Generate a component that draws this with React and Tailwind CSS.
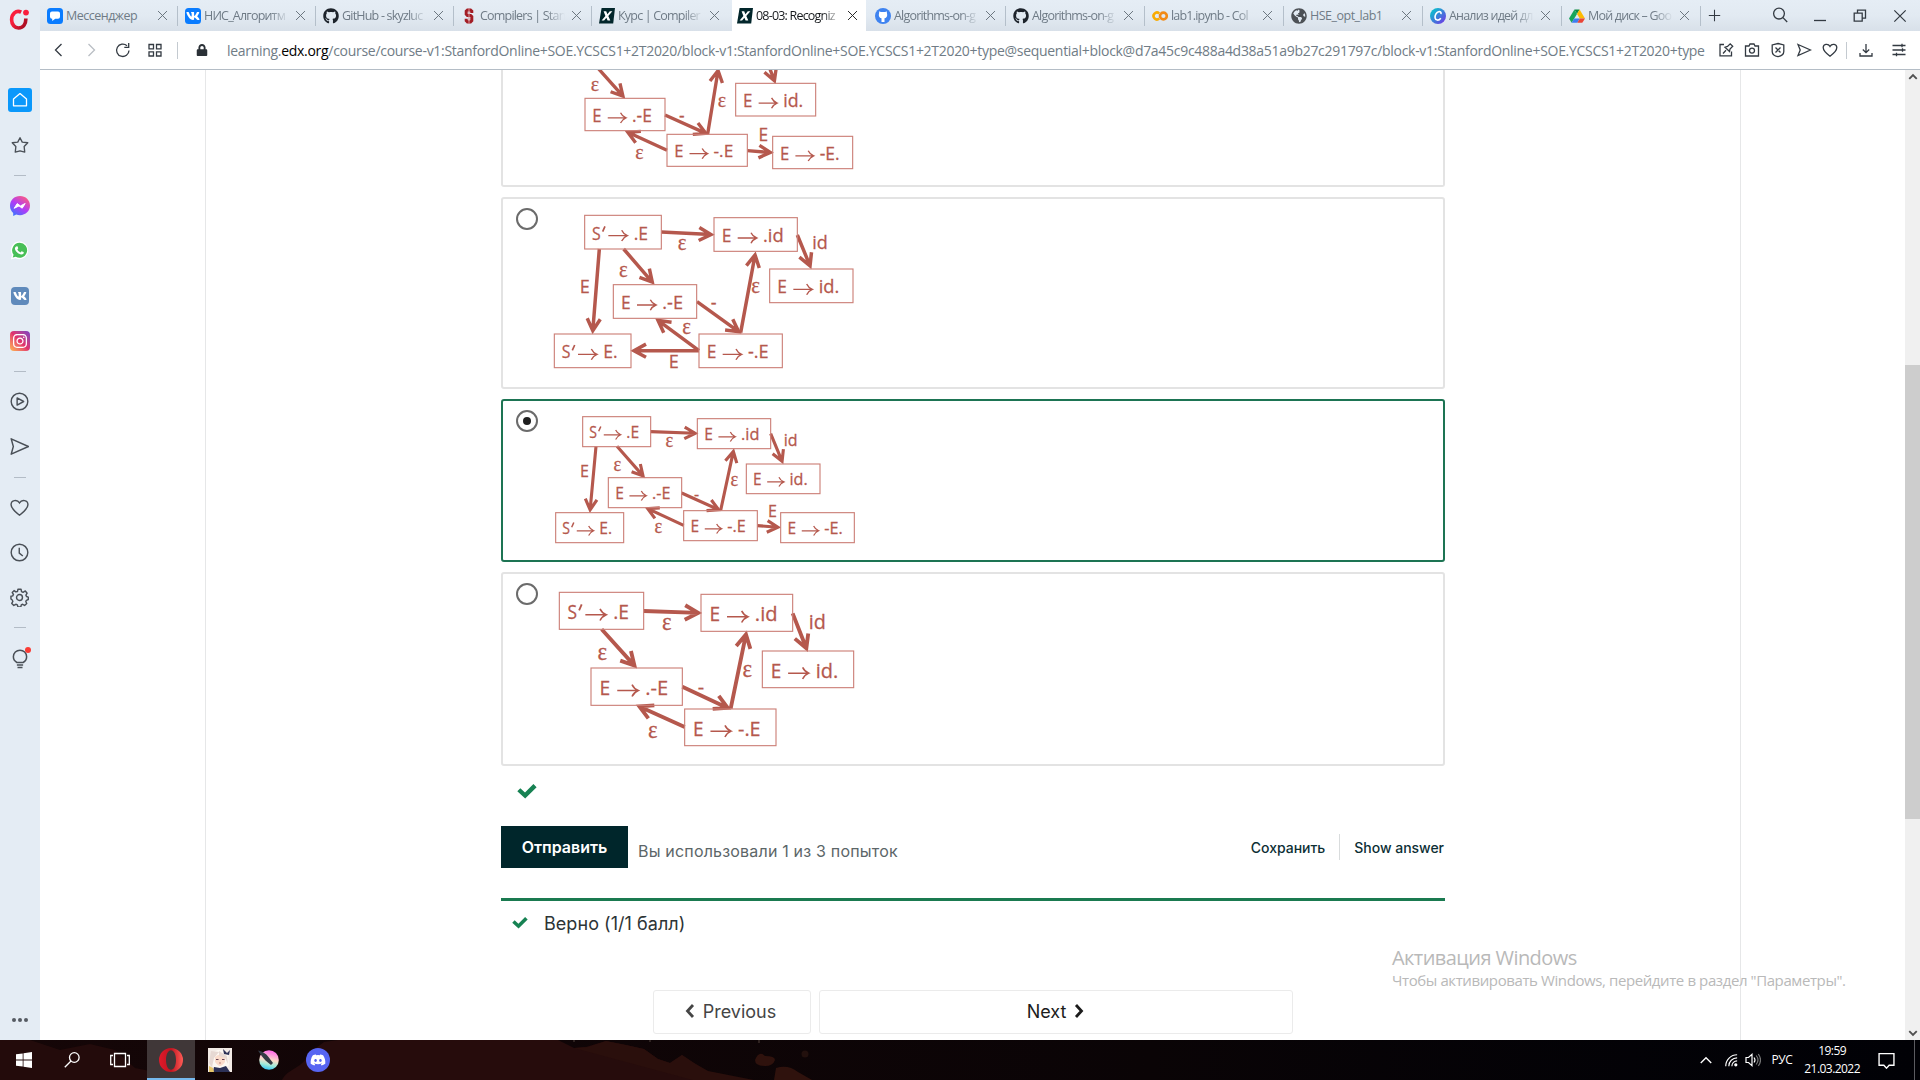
import React from "react";
import {
  FaGithub, FaVk, FaWhatsapp, FaInstagram, FaDiscord, FaLock, FaGlobeAmericas,
} from "react-icons/fa";

const RED = "#b5584d";

/* ---------- automaton diagrams ---------- */

function Node({ x, y, w, h, a, b }) {
  const s = h / 101;
  const prime = a === "S";
  const ax = x + 71 * s;
  const ay = y + 61 * s;
  const len = 57 * s;
  const wide = { ".E": 43, "E.": 43 }[b] || 62;
  return (
    <g>
      <rect x={x} y={y} width={w} height={h} fill="none" stroke="#cc8078" strokeWidth="3.4" />
      <g fill={RED} stroke={RED} strokeWidth="0.8" fontSize={54 * s} fontFamily="'Open Sans','Noto Sans',sans-serif">
        <text x={x + (prime ? 22 : 23) * s} y={y + 73 * s} textLength={(prime ? 26 : 29) * s} lengthAdjust="spacingAndGlyphs">{a}</text>
        <text x={x + 147 * s} y={y + 73 * s} textLength={wide * s} lengthAdjust="spacingAndGlyphs">{b}</text>
      </g>
      {prime && <path d={`M${x + 61 * s} ${y + 33 * s}l${-7 * s} ${16 * s}`} stroke={RED} strokeWidth={5 * s} />}
      <path
        d={`M${ax} ${ay}h${len}m${-17 * s} ${-16 * s}q${5 * s} ${11 * s} ${17 * s} ${16 * s}q${-12 * s} ${5 * s} ${-17 * s} ${16 * s}`}
        fill="none" stroke={RED} strokeWidth={4.2 * s}
      />
    </g>
  );
}

function Edge({ p, s }) {
  const [x1, y1, x2, y2] = p;
  const t = Math.atan2(y2 - y1, x2 - x1);
  const L = 41 * s;
  const ex = x2 - 5 * s * Math.cos(t);
  const ey = y2 - 5 * s * Math.sin(t);
  const wing = (d) => `${ex - L * Math.cos(t + d)} ${ey - L * Math.sin(t + d)}`;
  return (
    <path
      d={`M${x1} ${y1}L${ex} ${ey}M${wing(0.5)}L${ex} ${ey}L${wing(-0.5)}`}
      fill="none" stroke={RED} strokeWidth={10.5 * s}
    />
  );
}

function Label({ x, y, t, s }) {
  const eps = t === "ε";
  return (
    <text
      x={x} y={y} textAnchor="middle" fill={RED} stroke={RED} strokeWidth="0.8"
      fontSize={(eps ? 68 : 54) * s}
      {...(eps ? { textLength: 26 * s, lengthAdjust: "spacingAndGlyphs" } : {})}
      fontFamily={eps ? "'Liberation Serif',serif" : "'Open Sans','Noto Sans',sans-serif"}
    >
      {t}
    </text>
  );
}

function Diagram({ top, height, s, nodes, edges, labels }) {
  return (
    <svg className="block shrink-0 overflow-hidden" width="350" height={height} viewBox={`150 ${top} 1050 ${height * 3}`}>
      {edges.map((p, i) => <Edge key={i} p={p} s={s} />)}
      {nodes.map(([x, y, w, h, a, b], i) => <Node key={i} x={x} y={y} w={w} h={h} a={a} b={b} />)}
      {labels.map(([x, y, t], i) => <Label key={i} x={x} y={y} t={t} s={s} />)}
    </svg>
  );
}

const D1 = {
  top: 15, height: 115, s: 0.96,
  nodes: [[285, 100, 240, 97, "E", ".-E"], [531, 208, 241, 96, "E", "-.E"], [737, 55, 240, 98, "E", "id."], [848, 214, 240, 97, "E", "-E."]],
  edges: [[320, 5, 402, 97], [525, 150, 652, 207], [531, 256, 409, 200], [653, 207, 685, 12], [822, -35, 855, 52], [772, 257, 846, 263]],
  labels: [[315, 79, "ε"], [696, 126, "ε"], [575, 170, "-"], [448, 283, "ε"], [820, 228, "E"]],
};
const D2 = {
  top: 402, height: 188, s: 1,
  nodes: [[284, 451, 230, 101, "S", ".E"], [672, 458, 250, 101, "E", ".id"], [370, 659, 250, 101, "E", ".-E"], [839, 612, 250, 101, "E", "id."], [193, 807, 230, 101, "S", "E."], [627, 807, 250, 101, "E", "-.E"]],
  edges: [[514, 501, 668, 509], [401, 552, 490, 655], [328, 552, 308, 802], [922, 510, 962, 607], [621, 710, 750, 803], [752, 803, 796, 565], [627, 857, 500, 763], [627, 857, 427, 857]],
  labels: [[576, 555, "ε"], [400, 637, "ε"], [284, 683, "E"], [990, 551, "id"], [797, 685, "ε"], [671, 731, "-"], [590, 808, "ε"], [551, 908, "E"]],
};
const D3 = {
  top: 33, height: 159, s: 0.89,
  nodes: [[278, 80, 204, 90, "S", ".E"], [622, 86, 220, 90, "E", ".id"], [355, 263, 220, 90, "E", ".-E"], [769, 222, 221, 89, "E", "id."], [197, 368, 204, 90, "S", "E."], [581, 362, 221, 90, "E", "-.E"], [872, 368, 221, 90, "E", "-E."]],
  edges: [[482, 125, 620, 130], [381, 169, 462, 261], [318, 169, 300, 364], [842, 131, 878, 218], [575, 309, 690, 361], [692, 361, 731, 180], [581, 406, 469, 354], [802, 407, 868, 412]],
  labels: [[538, 171, "ε"], [382, 243, "ε"], [283, 260, "E"], [902, 168, "id"], [733, 287, "ε"], [620, 329, "-"], [505, 430, "ε"], [847, 382, "E"]],
};
const D4 = {
  top: 42, height: 190, s: 1.1,
  nodes: [[208, 97, 253, 111, "S", ".E"], [633, 103, 275, 111, "E", ".id"], [303, 324, 274, 112, "E", ".-E"], [584, 447, 274, 110, "E", "-.E"], [817, 273, 274, 110, "E", "id."]],
  edges: [[461, 153, 630, 159], [335, 208, 437, 321], [908, 160, 951, 270], [577, 380, 718, 446], [722, 446, 769, 218], [584, 501, 443, 437]],
  labels: [[530, 209, "ε"], [337, 301, "ε"], [982, 206, "id"], [772, 352, "ε"], [633, 402, "-"], [488, 533, "ε"]],
};

function Choice({ data, selected, className }) {
  return (
    <div className={"flex shrink-0 gap-0.5 rounded-[3px] border-2 pl-[13px] " + (selected ? "border-[#1d7453] " : "border-[#e3e3e3] ") + className}>
      <span className="mt-[9px] flex size-[22px] shrink-0 items-center justify-center rounded-full border-2 border-[#6b6b6b]">
        {selected && <span className="size-2 rounded-full bg-[#1f1f1f]" />}
      </span>
      <Diagram {...data} />
    </div>
  );
}

/* ---------- browser chrome ---------- */

function Line({ children, className = "size-4", sw = 1.3, vb = "0 0 16 16" }) {
  return (
    <svg className={className} viewBox={vb} fill="none" stroke="currentColor" strokeWidth={sw}>
      {children}
    </svg>
  );
}

const Cross = ({ className = "size-[11px]" }) => (
  <Line className={className} sw={1.4}><path d="M1.5 1.5l13 13M14.5 1.5l-13 13" /></Line>
);

const EdxIcon = () => (
  <svg className="size-4" viewBox="0 0 16 16">
    <path d="M2.6 0H16l-1.8 15.6H0z" fill="#02262b" />
    <path d="M4.6 3.2h2.6l1.2 3 2.4-3h2.6L9.3 8l2 4.6H8.6L7.4 9.8l-2.3 2.8H2.6L6.4 8z" fill="#fff" />
  </svg>
);

const favicons = {
  chat: (
    <svg className="size-4" viewBox="0 0 16 16">
      <rect width="16" height="16" rx="3.5" fill="#0a7cff" />
      <path d="M5 3.4h6A2 2 0 0113 5.4v3.4a2 2 0 01-2 2H8.3L5.2 13v-2.2H5a2 2 0 01-2-2V5.4A2 2 0 015 3.4z" fill="#fff" />
    </svg>
  ),
  vk: <span className="flex size-4 items-center justify-center rounded-[3.5px] bg-[#0a7cff] text-white"><FaVk className="size-3.5" /></span>,
  github: <FaGithub className="size-4 text-[#1d232b]" />,
  stanford: (
    <svg className="size-4" viewBox="0 0 16 16" fill="none">
      <path d="M10.8 5V3.2L9.5 2h-3L5.2 3.2v3l1.2 1.2h3.2l1.2 1.2v4L9.5 14h-3l-1.3-1.4V10.8" stroke="#a31d25" strokeWidth="3" />
      <path d="M8 .5v15" stroke="#d98d90" strokeWidth="1" />
    </svg>
  ),
  edx: <EdxIcon />,
  ghpages: (
    <span className="flex size-4 items-center justify-center rounded-full bg-[#3f83f0]">
      <svg className="size-3" viewBox="0 0 12 12" fill="#fff"><path d="M2.3 1.2l1.5.8h4.4l1.5-.8.5 3.8c0 2-1.2 3-2.7 3.2V12h-3V8.200C3 8 1.800 7 1.800 5z" /></svg>
    </span>
  ),
  colab: (
    <svg className="size-4" viewBox="0 0 16 16" fill="none" strokeWidth="2.6">
      <circle cx="11.4" cy="8" r="3.4" stroke="#f28a17" />
      <path d="M7.2 5.400a3.400 3.400 0 100 5.200" stroke="#f9ab00" />
    </svg>
  ),
  globe: <FaGlobeAmericas className="size-4 text-[#4d5156]" />,
  canva: (
    <svg className="size-4" viewBox="0 0 16 16">
      <defs><linearGradient id="cv" x1="0" y1="0" x2="1" y2="1"><stop offset=".2" stopColor="#12b5cf" /><stop offset="1" stopColor="#7a2be8" /></linearGradient></defs>
      <circle cx="8" cy="8" r="8" fill="url(#cv)" />
      <path d="M11 6.200c.4-2.200-1-3-2.500-2.400C6.200 4.600 4.800 7.500 5.100 9.800c.4 2.700 3.500 3.200 5.700.4" fill="none" stroke="#fff" strokeWidth="1.6" />
    </svg>
  ),
  drive: (
    <svg className="size-4" viewBox="0 0 16 16">
      <path d="M5.400 1.500h5.200L8 6z" fill="#0c8a43" />
      <path d="M5.400 1.500L8 6 2.700 14.800 0 10.500z" fill="#17a55b" />
      <path d="M10.600 1.500L16 10.500h-5.200L8 6z" fill="#fdba02" />
      <path d="M5.200 10.500h5.600l-2.500 4.300H2.700z" fill="#3f7df0" />
      <path d="M10.800 10.500H16l-2.700 4.300H8.300z" fill="#ea4436" />
    </svg>
  ),
};

const tabs = [
  ["chat", "Мессенджер", "w-[138px]"],
  ["vk", "НИС_Алгоритм", "w-[138px]"],
  ["github", "GitHub - skyzluc", "w-[138px]"],
  ["stanford", "Compilers | Stan", "w-[138px]"],
  ["edx", "Курс | Compiler", "w-[138px]"],
  ["edx", "08-03: Recogniz", "w-[138px]"],
  ["ghpages", "Algorithms-on-g", "w-[138px]"],
  ["github", "Algorithms-on-g", "w-[139px]"],
  ["colab", "lab1.ipynb - Col", "w-[139px]"],
  ["globe", "HSE_opt_lab1", "w-[139px]"],
  ["canva", "Анализ идей дл", "w-[139px]"],
  ["drive", "Мой диск – Goo", "w-[139px]"],
];

const ACTIVE = 5;

function TabBar() {
  return (
    <div className="flex h-[31px] shrink-0 items-stretch bg-linear-to-b from-[#e5edf5] via-[#e2eaf2] to-[#d8e0e9] text-[#6f7b86]">
      {tabs.map(([icon, title, w], i) => {
        const active = i === ACTIVE;
        const short = i === 0 || i === 9;
        return (
          <div key={i} className={"flex shrink-0 items-center " + w + (active ? " px-0.5" : "")}>
            <div className={"flex h-full min-w-0 flex-1 items-center " + (active ? "bg-white pl-[5px] text-[#16191c]" : "pl-[7px]")}>
              <span className="shrink-0">{favicons[icon]}</span>
              <span className={"ml-[3px] w-[85px] shrink-0 overflow-hidden text-[12.5px] leading-4 whitespace-nowrap " + (short ? "tracking-[-0.5px]" : "mask-r-from-78% mask-r-to-100% tracking-[-0.8px]")}>{title}</span>
              <span className={"ml-1.5 flex shrink-0 " + (active ? "text-[#222]" : "text-[#67717b]")}><Cross /></span>
            </div>
            {i !== ACTIVE - 1 && !active && <span className="h-5 w-px shrink-0 bg-[#b4bfca]" />}
          </div>
        );
      })}
      <div className="flex flex-1 items-center text-[#333a42]">
        <Line className="ml-[7px] size-[13px] shrink-0"><path d="M8 1v14M1 8h14" /></Line>
        <Line className="mt-[-1px] ml-[51px] size-4 shrink-0"><circle cx="7" cy="6.600" r="5.400" /><path d="M11 10.600l4.200 4.400" /></Line>
        <Line className="ml-6 size-4 shrink-0"><path d="M2 12.500h12" /></Line>
        <Line className="ml-6 size-4 shrink-0"><path d="M2.200 5.200h8v8h-8zM5.500 5V2.200h8v8h-3" /></Line>
        <span className="ml-[25px] shrink-0"><Cross className="size-3.5" /></span>
      </div>
    </div>
  );
}

function AddressBar() {
  return (
    <div className="flex h-[39px] shrink-0 items-center border-b border-[#b4bdc6] bg-white text-[#333a42]">
      <Line className="ml-[11px] size-4 shrink-0"><path d="M10.500 2L4.500 8l6 6" /></Line>
      <Line className="ml-4 size-4 shrink-0 text-[#b9bec4]"><path d="M5.500 2l6 6-6 6" /></Line>
      <Line className="ml-4 size-4 shrink-0"><path d="M14 8.500a6.200 6.200 0 11-2-4.800M13.700 1v4.400h-4.400" /></Line>
      <Line className="ml-4 size-4 shrink-0"><path d="M2 2.500h4.500v4.300H2zM9.500 2.500H14v4.300H9.500zM2 9.800h4.500v4.200H2zM9.500 9.800H14v4.200H9.500z" /></Line>
      <span className="ml-[14px] h-[17px] w-px shrink-0 bg-[#c4cad0]" />
      <FaLock className="ml-[18px] size-3 shrink-0 text-[#2a3036]" />
      <div className="ml-[19px] w-[1481px] shrink-0 overflow-hidden text-[14px] tracking-[-0.295px] whitespace-nowrap text-[#707c86]">
        learning.<span className="text-black">edx.org</span>/course/course-v1:StanfordOnline+SOE.YCSCS1+2T2020/block-v1:StanfordOnline+SOE.YCSCS1+2T2020+type@sequential+block@d7a45c9c488a4d38a51a9b27c291797c/block-v1:StanfordOnline+SOE.YCSCS1+2T2020+type
      </div>
      <div className="ml-[10px] flex shrink-0 items-center gap-2.5">
        <Line><path d="M6 2.500H2v11.300h11.500V9.500M5 11.500l3-3.200M7 5.200L11.500 9.500 12 7l2.700-2.700L12.200 1.800 9.500 4.500z" /></Line>
        <Line><path d="M1.500 4H5l1-2h4l1 2h3.500v10h-13z" /><circle cx="8" cy="8.600" r="2.500" /></Line>
        <Line><path d="M8 1.500l5.800 1.400v6.500C13.800 12 11 14 8 14.700 5 14 2.200 12 2.200 9.400V2.900zM5.500 5.500l5 5M10.500 5.500l-5 5" /></Line>
        <Line><path d="M2 2.500L14.500 8 2 13.500 4.200 8z" /></Line>
        <Line><path d="M8 14.200C3.500 11 1.200 8.500 1.200 5.600 1.200 2 6 1 8 4.400 10 1 14.800 2 14.800 5.600 14.800 8.500 12.500 11 8 14.200z" /></Line>
      </div>
      <span className="ml-2 h-[17px] w-px shrink-0 bg-[#c4cad0]" />
      <Line className="ml-[11px] size-4 shrink-0"><path d="M8 2v8.500M4.800 7.500L8 10.700l3.200-3.200M2 11v3h12v-3" /></Line>
      <Line className="ml-[17px] size-4 shrink-0"><path d="M1.500 3.500h13M1.500 8h13M1.500 12.500h13M11 1.800v3.400M11.500 6.300v3.400M5.500 10.800v3.400" /></Line>
    </div>
  );
}

const Slot = ({ children }) => <div className="flex h-[45.25px] shrink-0 items-center justify-center">{children}</div>;
const Rule = () => <div className="flex h-[15px] shrink-0 items-center justify-center"><span className="h-px w-3 bg-[#b3bcc6]" /></div>;

function SideBar() {
  return (
    <aside className="flex h-[1040px] w-10 shrink-0 flex-col bg-[#e4ecf4] pr-px text-[#4a5057]">
      <div className="flex h-[77.5px] shrink-0 justify-center pt-[9px]">
        <svg className="size-[21px]" viewBox="0 0 21 21" fill="none">
          <defs><linearGradient id="og" x1="0" y1="0" x2="1" y2=".6"><stop offset=".3" stopColor="#fa1e3c" /><stop offset="1" stopColor="#b00f24" /></linearGradient></defs>
          <path d="M12.200 3.200C7 .5 2.600 5 2.600 10.800c0 5 3.200 8.200 7 8.200 4.800 0 7.400-4 7.200-9.500" stroke="url(#og)" strokeWidth="3.600" />
          <circle cx="17" cy="3.600" r="2.900" fill="#fa1e3c" />
        </svg>
      </div>
      <Slot><span className="flex size-6 items-center justify-center rounded-[3px] bg-[#0a98fb] text-white"><Line sw={1.3}><path d="M1.500 7L8 1.600 14.500 7v6.800h-13z" strokeLinejoin="round" /></Line></span></Slot>
      <Slot><Line className="size-[18px]" sw={1.2}><path d="M8 1.500l2 3.900 4.900.6-3.200 3.400.5 4.900L8 13.300l-4.200 1 .5-4.900L1.100 6l4.900-.6z" strokeLinejoin="round" /></Line></Slot>
      <Rule />
      <Slot>
        <svg className="size-5" viewBox="0 0 20 20">
          <defs><linearGradient id="ms" x1=".1" y1="1" x2=".8" y2="0"><stop offset="0" stopColor="#2d7bff" /><stop offset=".5" stopColor="#b03cf8" /><stop offset="1" stopColor="#ff5c7c" /></linearGradient></defs>
          <path d="M10 0C4.300 0 0 4.100 0 9.700c0 3 1.200 5.500 3.200 7.200V20l3-1.400c1.200.4 2.500.6 3.800.6 5.700 0 10-4.100 10-9.600S15.700 0 10 0z" fill="url(#ms)" />
          <path d="M4.200 12.300L7.200 7.600l3.200 2.300 4.800-2.400-3 4.700L9 9.900z" fill="#fff" stroke="#fff" />
        </svg>
      </Slot>
      <Slot>
        <svg className="size-[19px]" viewBox="0 0 19 19">
          <path d="M9.700.5a8.800 8.800 0 11-4.200 16.700L.8 18.500l1.300-4.600A8.800 8.800 0 019.700.5z" fill="#fff" />
          <path d="M9.700 1.800a7.500 7.500 0 11-4 13.900l-3 .9.9-2.900A7.500 7.500 0 019.700 1.800z" fill="#48bf57" />
          <path d="M7.200 5.200c.5 0 .9 1.600 1 2 0 .5-.9 1-.8 1.400.7 1.400 1.700 2.300 3 2.800.4 0 .9-1 1.300-1.100.4 0 2 .8 2.100 1.100.1 1.200-1.100 2-2.300 2-3.300-.3-6.400-3.400-6.600-6 0-1.100 1-2.300 2.300-2.200z" fill="#fff" />
        </svg>
      </Slot>
      <Slot><span className="flex size-[18px] items-center justify-center rounded-[4px] bg-[#5f8abb] text-white"><FaVk className="size-3.5" /></span></Slot>
      <Slot><span className="flex size-5 items-center justify-center rounded-[4px] bg-linear-to-tr from-[#fdb649] via-[#e1306c] to-[#7b3bc4] text-white"><FaInstagram className="size-4" /></span></Slot>
      <Rule />
      <Slot><Line className="size-[19px]" sw={1.2}><circle cx="8" cy="8" r="7" /><path d="M6 5l5.500 3L6 11z" strokeLinejoin="round" /></Line></Slot>
      <Slot><Line className="size-[19px]" sw={1.2}><path d="M1 1.500L15.500 8 1 14.500 2.800 8z" strokeLinejoin="round" /></Line></Slot>
      <Rule />
      <Slot><Line className="size-[19px]" sw={1.2}><path d="M8 14.500C3.500 11 .9 8.500.9 5.600.9 1.800 6 .9 8 4.200 10 .9 15.100 1.800 15.100 5.600 15.100 8.500 12.500 11 8 14.500z" /></Line></Slot>
      <Slot><Line className="size-[19px]" sw={1.2}><circle cx="8" cy="8" r="7" /><path d="M7.800 4v4.500l3 2.500" /></Line></Slot>
      <Slot>
        <Line className="size-[19px]" sw={1.2}>
          <circle cx="8" cy="8" r="2.500" />
          <path d="M6.700 1h2.600l.4 2 1.300.6L12.900 2.500l1.500 1.900-1 1.600.5 1.200 1.500.5v2l-1.600.7-.5 1 .8 1.700-1.800 1.600-1.700-1-1.100.5-.4 1.800H6.700l-.5-1.800-1.300-.5-1.700 1-1.700-1.700.9-1.700-.5-1.200L.8 9.300V7l1.500-.4.6-1.200-1-1.600 1.500-1.600L5 3.300 6.300 3z" strokeLinejoin="round" />
        </Line>
      </Slot>
      <Rule />
      <Slot>
        <span className="relative mt-0.5 flex">
          <Line className="size-5" sw={1.2}><path d="M5.500 10.800C3.500 9.600 2.700 8 2.700 6.200a5.300 5.300 0 0110.600 0c0 1.800-.8 3.400-2.800 4.600zM5.500 12.700h5M6 14.800h4" /></Line>
          <span className="absolute top-[-2px] right-[-1px] size-1.5 rounded-full bg-[#fa3c34]" />
        </span>
      </Slot>
      <div className="mt-auto flex justify-center gap-0.5 pb-[18px]">
        {[0, 1, 2].map((i) => <span key={i} className="size-1 rounded-full bg-[#555b62]" />)}
      </div>
    </aside>
  );
}

/* ---------- course page ---------- */

const Chevron = ({ d }) => <Line className="h-4 w-3" vb="0 0 12 16" sw={2.8}><path d={d} /></Line>;

const Check = ({ className }) => (
  <svg className={className} viewBox="0 0 20 16" fill="#178253">
    <path d="M3.300 5.200L8 9.600 16.400 1 19.600 4.200 8.200 15.600.300 8.300z" />
  </svg>
);

function Page() {
  return (
    <div className="flex min-h-0 flex-1 bg-white">
      <main className="ml-[165px] flex w-[1536px] shrink-0 flex-col border-x border-[#e6e7e8] font-['Inter',sans-serif]">
        <div className="ml-[295px] flex w-[944px] flex-col">
          <div className="flex flex-col gap-2.5">
            <Choice data={D1} className="h-[117px] rounded-t-none border-t-0 [&>span]:invisible" />
            <Choice data={D2} className="h-[192px]" />
            <Choice data={D3} selected className="h-[163px]" />
            <Choice data={D4} className="h-[194px]" />
          </div>
          <Check className="mt-[17px] ml-4 h-4 w-5" />
          <div className="mt-[27px] flex h-[42px] items-center">
            <button className="h-[42px] w-[127px] bg-[#00262b] text-[16px] font-semibold text-white">Отправить</button>
            <span className="mt-2 ml-[10px] text-[16px] tracking-[0.19px] whitespace-nowrap text-[#5c6668]">Вы использовали 1 из 3 попыток</span>
            <div className="ml-auto flex items-center pr-px text-[14px] font-medium tracking-[-0.02px] text-[#0d2f35]">
              <span>Сохранить</span>
              <span className="mx-[14px] h-[26px] w-px bg-[#d9dcdd]" />
              <span>Show answer</span>
            </div>
          </div>
          <div className="mt-[30px] h-[3px] bg-[#1a7a50]" />
          <div className="mt-2 flex h-[27px] items-center">
            <Check className="ml-[11px] h-[13px] w-4" />
            <span className="mt-px ml-4 text-[18px] tracking-[0.05px] text-[#2d3436]">Верно (1/1 балл)</span>
          </div>
          <div className="mt-[54px] ml-[152px] flex h-11 gap-2 text-[18px]">
            <div className="flex w-[158px] items-center justify-center gap-[7px] rounded-[3px] border border-[#ebebeb] pr-1 pb-0.5 text-[#454545]">
              <Chevron d="M9 2L3.500 8 9 14" />Previous
            </div>
            <div className="flex w-[474px] items-center justify-center gap-[7px] rounded-[3px] border border-[#ebebeb] pb-0.5 text-[#1c1c1c]">
              Next<Chevron d="M3 2L8.500 8 3 14" />
            </div>
          </div>
        </div>
      </main>
      <div className="ml-auto flex w-[15px] flex-col items-center bg-[#f0f0f0] text-[#505050]">
        <Line className="mt-0.5 size-2.5" sw={3}><path d="M2 11l6-6 6 6" /></Line>
        <div className="mt-[283px] h-[454px] w-full bg-[#cdcdcd]" />
        <Line className="mt-auto mb-0.5 size-2.5" sw={3}><path d="M2 5l6 6 6-6" /></Line>
      </div>
    </div>
  );
}

/* ---------- taskbar ---------- */

function TaskBar() {
  return (
    <div className="relative flex h-10 items-center bg-linear-to-r from-[#150607] via-[#0a0406] via-60% to-[#010106] text-white">
      <svg className="absolute inset-0" width="1920" height="40">
        <path d="M60 10l30-6 25 6 20 18 60 12H0V0h30z" fill="#230b0b" />
        <path d="M282 40c6-12 22-12 26-26l16-12 14-2H558l16 8 12-1 20-6 20 4 18 4 14 10 12 4 12-8 12 8 12 8 20 4 40 12 16 3z" fill="#260c0c" />
        <path d="M574 8l14-1 18-6 20 4 18 4 14 10 12 4 12-8 12 8 14 8 56 11H700z" fill="#2a0f0c" />
        <path d="M776 28q12-4 22 4l14 8H774zM755 20q4-10 10-4 10 0 10 4-2 6-10 6-10 0-10-6z" fill="#2f120d" />
        <circle cx="805" cy="14" r="3.5" fill="#22100d" />
        <path d="M574 0v2M759 0v3M650 0v2" stroke="#2e2220" strokeWidth="2" />
      </svg>
      <div className="relative flex h-full w-full items-center">
        <div className="flex h-full w-[147px] items-center pl-4">
          <svg className="size-4" viewBox="0 0 16 16" fill="#fff"><path d="M0 2.300l6.700-.9v6.200H0zM7.500 1.300L16 0v7.600H7.500zM0 8.400h6.700v6.200L0 13.700zM7.500 8.400H16V16l-8.500-1.200z" /></svg>
          <Line className="ml-8 size-4" sw={1.3}><circle cx="10.300" cy="5.500" r="4.800" /><path d="M7 9L.8 15.200" /></Line>
          <Line className="ml-[30px] h-4 w-5" vb="0 0 20 16"><path d="M4.500 1.500h11v13h-11zM3 3.500H.7v9H3M17 3.500h2.300v9H17" /></Line>
        </div>
        <div className="flex h-full w-12 items-center justify-center border-b-2 border-[#76b9ed] bg-[#403738] pt-0.5">
          <svg className="size-6" viewBox="0 0 24 24">
            <defs><linearGradient id="op" x1="0" y1="0" x2="1" y2="0"><stop offset="0" stopColor="#e0192a" /><stop offset=".5" stopColor="#c01420" /><stop offset="1" stopColor="#ff5b55" /></linearGradient></defs>
            <path fillRule="evenodd" d="M12 0a12 12 0 100 24 12 12 0 000-24zm0 2.200c3 0 5 4.300 5 9.800s-2 9.800-5 9.800-5-4.300-5-9.800 2-9.800 5-9.800z" fill="url(#op)" />
          </svg>
        </div>
        <svg className="ml-[13px] size-6" viewBox="0 0 24 24">
          <rect width="24" height="24" fill="#f3ebe6" />
          <path d="M4 6Q12-3 20 7l1 10-3 3H6l-3-4z" fill="#fdf8f2" />
          <path d="M7 9q5-5 10 0v5q-3 4-5 4t-5-4z" fill="#fbdccb" />
          <path d="M3 3l8 1-5 6-2 9-3-4zM11 3l8 5 1 8-3-6-6-2z" fill="#e7d9d3" />
          <path d="M8 11.500h2.500M14 11.500h2.500" stroke="#6b4556" />
          <path d="M11 15h2" stroke="#b98079" />
          <path d="M15 1l4 4 3-3-1 5-5-1zM6 19l6 1 6-2 4 6H5z" fill="#2c3157" />
          <path d="M1 18l4 2 1 4H1z" fill="#e7c66a" />
        </svg>
        <svg className="ml-[25px] size-6" viewBox="0 0 24 24">
          <defs><linearGradient id="kr" x1=".6" y1="0" x2=".4" y2="1"><stop offset=".05" stopColor="#ff6ee8" /><stop offset=".5" stopColor="#f9dcc8" /><stop offset=".75" stopColor="#9fe8d8" /><stop offset="1" stopColor="#2fc4f5" /></linearGradient></defs>
          <circle cx="12" cy="12" r="9.800" fill="url(#kr)" />
          <path d="M1 2.500c4 .5 8 3 10.500 6.500l4.500 6-2 2-5.500-4.500C5.500 9 3 6 1 2.500z" fill="#333a44" />
        </svg>
        <span className="ml-[25px] flex size-6 items-center justify-center rounded-full bg-[#5765f2]"><FaDiscord className="size-4" /></span>
        <div className="ml-auto flex h-full items-center">
          <Line className="size-3" sw={1.8}><path d="M1 12l7-7 7 7" /></Line>
          <Line className="ml-3 size-3.5" sw={1.3}><path d="M2 15A13 13 0 0115 2M5.500 15A9.500 9.500 0 0115 5.500M9 15a6 6 0 016-6" /><circle cx="13.500" cy="13.500" r="1.200" fill="#fff" /></Line>
          <Line className="ml-[7px] size-4" sw={1.2}><path d="M1 5.500h2.500L7 2.300v11.400L3.500 10.500H1zM9 5.500q2 2.500 0 5" /><path d="M11.200 3.500q3.600 4.500 0 9M13.300 2q4.400 6 0 12" stroke="#777" /></Line>
          <span className="ml-[11px] text-[12px] tracking-[-0.5px]">РУС</span>
          <div className="ml-3 flex flex-col items-center text-[12px] leading-[18px] tracking-[-0.55px]"><span>19:59</span><span>21.03.2022</span></div>
          <Line className="ml-[18px] size-[17px]" sw={1.3}><path d="M1 1.500h14v11h-4.500L8 15.200l-2.500-2.700H1z" /></Line>
          <span className="ml-[19px] h-full w-px bg-[#5b5b60]" />
          <span className="w-[5px]" />
        </div>
      </div>
    </div>
  );
}

export default function App() {
  return (
    <div className="relative h-[1080px] w-[1920px] overflow-hidden bg-white font-['Open_Sans','Noto_Sans',sans-serif]">
      <div className="flex h-[1040px]">
        <SideBar />
        <div className="flex min-w-0 flex-1 flex-col">
          <TabBar />
          <AddressBar />
          <Page />
        </div>
      </div>
      <TaskBar />
      <div className="pointer-events-none absolute top-[944px] left-[1392px] whitespace-nowrap text-[#b9b9b9]">
        <div className="text-[20px] leading-7 tracking-[-0.57px]">Активация Windows</div>
        <div className="mt-[-1px] text-[15px] leading-[18px] tracking-[-0.4px]">Чтобы активировать Windows, перейдите в раздел "Параметры".</div>
      </div>
    </div>
  );
}
